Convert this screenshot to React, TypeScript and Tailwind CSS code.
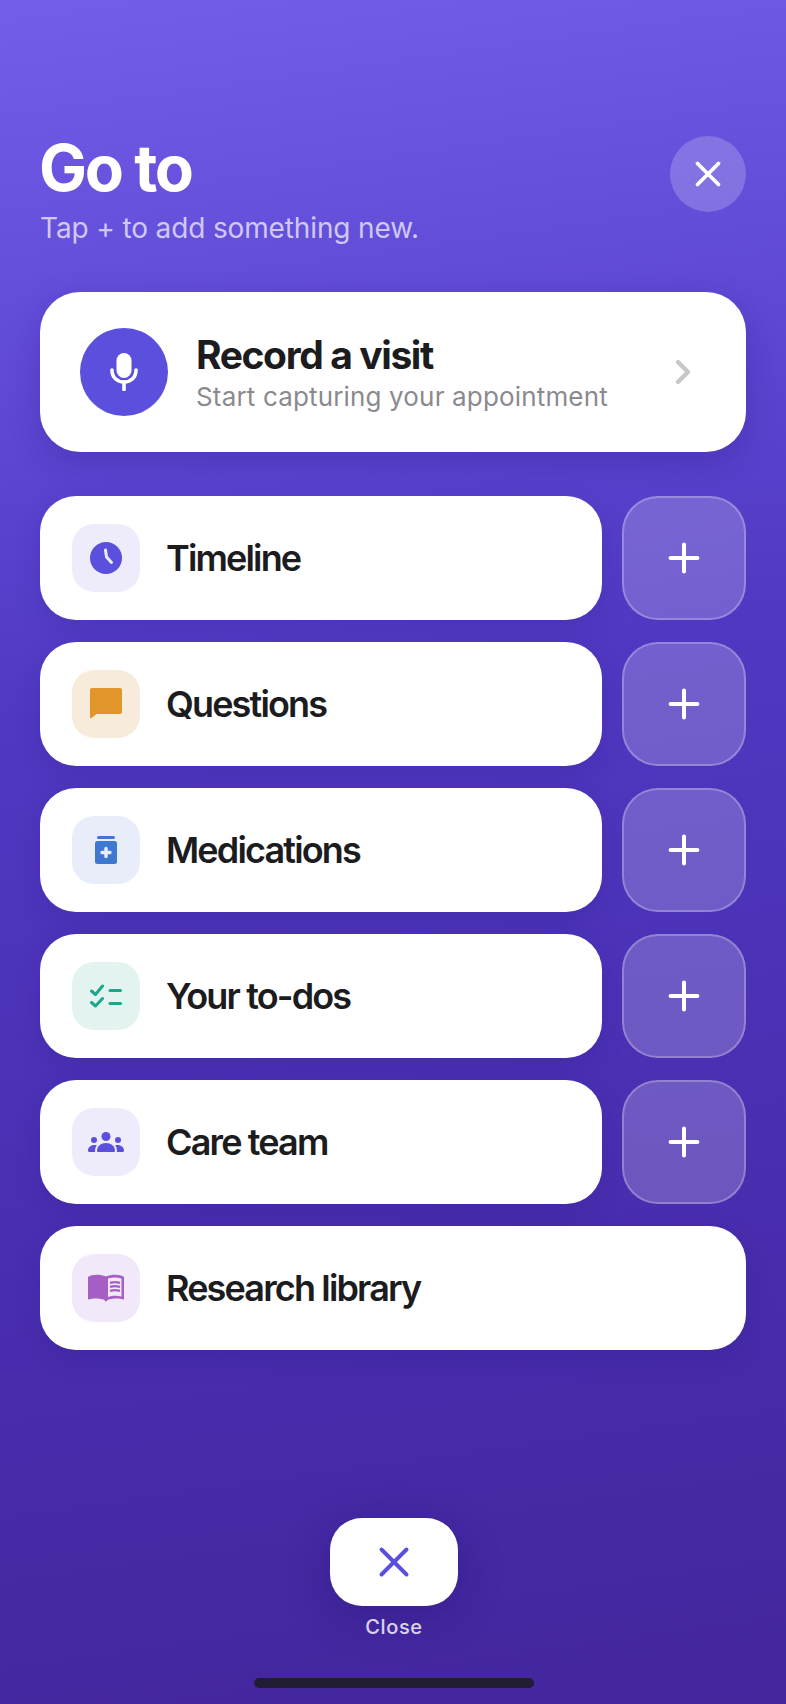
import { ChevronRight, Plus, X } from "lucide-react";
import type { ReactNode } from "react";

const ClockIcon = () => (
  <svg width="32" height="32" viewBox="0 0 32 32">
    <circle cx="16" cy="16" r="16" fill="#5b4fdd" />
    <path d="M15.500 8L16.500 15L21.500 20.500" fill="none" stroke="#eeebfb" strokeWidth="3" strokeLinecap="round" strokeLinejoin="round" />
  </svg>
);

const ChatIcon = () => (
  <svg width="32" height="32" viewBox="0 0 32 32">
    <path d="M2 0H30a2 2 0 0 1 2 2V24a2 2 0 0 1-2 2H6.500L1.500 30a1 1 0 0 1-1.500-.8V2a2 2 0 0 1 2-2Z" fill="#e2952b" />
  </svg>
);

const MedIcon = () => (
  <svg width="22" height="28" viewBox="0 0 22 28">
    <rect x="2" y="0" width="18" height="3" rx="1.500" fill="#3f78d0" />
    <rect x="0" y="5" width="22" height="23" rx="2.500" fill="#3f78d0" />
    <path d="M11 12.500V20.500M7 16.500H15" stroke="#e8edf9" strokeWidth="3.400" strokeLinecap="round" />
  </svg>
);

const TodoIcon = () => (
  <svg width="32" height="24" viewBox="0 0 32 24" fill="none" stroke="#1fa58a" strokeWidth="3" strokeLinecap="round" strokeLinejoin="round">
    <path d="M1.500 7L5.500 10.500L12.500 2" />
    <path d="M1.500 18.500L5.500 22L12.500 14.500" />
    <path d="M20 6.500H30.500" />
    <path d="M20 19.500H30.500" />
  </svg>
);

const TeamIcon = () => (
  <svg width="36" height="20" viewBox="0 0 36 20" fill="#5b4fdd">
    <circle cx="18" cy="4.500" r="4.500" />
    <circle cx="6" cy="8" r="3" />
    <circle cx="30" cy="8" r="3" />
    <path d="M9 19a1 1 0 0 0 1 1H26a1 1 0 0 0 1-1C27 14 23 11 18 11C13 11 9 14 9 19Z" />
    <path d="M0 18.500C0 15 3 13 7.500 13C8 13 8.500 13 8.800 13.200C7.500 14.800 7 17 7 20H1.500C.6 20 0 19.400 0 18.500Z" />
    <path d="M36 18.500C36 15 33 13 28.500 13C28 13 27.500 13 27.200 13.200C28.500 14.800 29 17 29 20H34.500C35.400 20 36 19.400 36 18.500Z" />
  </svg>
);

const BookIcon = () => (
  <svg width="36" height="28" viewBox="0 0 36 28">
    <path d="M0 3C4 0 12 0 18 2.500C24 0 32 0 36 3V24.700A.8.8 0 0 1 35 25.500C31 24 24 24 19.500 26C18.500 28 17.500 28 16.500 26C12 24 5 24 1 25.500A.8.8 0 0 1 0 24.700Z" fill="#a45ec4" />
    <path d="M20 4.500C24 3.200 29.500 3.200 33.500 4.600V22.500C29.500 21.500 24 21.500 20 23Z" fill="#f1e8f9" />
    <path d="M23 8.700C25.500 8 28.500 8 31 8.700M23 12.700C25.500 12 28.500 12 31 12.700M23 16.700C25.500 16 28.500 16 31 16.700" fill="none" stroke="#a45ec4" strokeWidth="2.400" strokeLinecap="round" />
  </svg>
);

const Row = ({ icon, tint, label, wide }: { icon: ReactNode; tint: string; label: string; wide?: boolean }) => (
  <div className="flex gap-5">
    <div className="flex h-[124px] flex-1 items-center gap-[26px] rounded-[36px] bg-white pl-8 shadow-[0_8px_24px_rgba(40,20,120,0.18)]">
      <div className={`flex h-[68px] w-[68px] items-center justify-center rounded-[22px] ${tint}`}>{icon}</div>
      <span className="text-[36px] font-semibold tracking-[-1.85px] text-[#1c1c1e]">{label}</span>
    </div>
    {!wide && (
      <button className="flex h-[124px] w-[124px] items-center justify-center rounded-[36px] border-2 border-white/25 bg-white/20">
        <Plus className="h-[46px] w-[46px] text-white" strokeWidth={2.1} />
      </button>
    )}
  </div>
);

export default function App() {
  return (
    <div className="flex h-[1704px] w-[786px] flex-col bg-[linear-gradient(172deg,#715ee9_0%,#5c46d2_25%,#5138c2_40%,#4d33b9_55%,#482cad_75%,#43269c_100%)] px-10 font-['Inter',sans-serif]">
      <div className="flex items-start justify-between pt-[128px]">
        <div>
          <h1 className="-ml-px text-[64px] leading-[80px] font-bold tracking-[-2.4px] text-white">Go to</h1>
          <p className="mt-[2px] text-[28px] leading-[36px] tracking-[-0.13px] text-white/70">Tap + to add something new.</p>
        </div>
        <button className="mt-2 flex h-[76px] w-[76px] items-center justify-center rounded-full bg-white/20">
          <X className="h-[42px] w-[42px] text-white" strokeWidth={2.1} />
        </button>
      </div>

      <div className="mt-[46px] flex h-[160px] items-center rounded-[40px] bg-white pr-[43px] pl-10 shadow-[0_10px_30px_rgba(40,20,120,0.25)]">
        <div className="flex h-[88px] w-[88px] items-center justify-center rounded-full bg-[#5b4fdd]">
          <svg width="30" height="38" viewBox="0 0 30 38" fill="none">
            <rect x="7.500" y="0" width="15" height="25" rx="7.500" fill="#fff" />
            <path d="M3 17C3 24.500 8 29 15 29C22 29 27 24.500 27 17" stroke="#fff" strokeWidth="3.600" strokeLinecap="round" />
            <path d="M15 29V36.500" stroke="#fff" strokeWidth="3.600" strokeLinecap="round" />
          </svg>
        </div>
        <div className="ml-[28px] flex-1">
          <div className="pt-px text-[39px] leading-[46px] font-bold tracking-[-1.4px] text-[#1c1c1e]">Record a visit</div>
          <div className="mt-[2px] text-[26px] leading-[34px] tracking-[0.16px] text-[#8a8a8e]">Start capturing your appointment</div>
        </div>
        <ChevronRight className="h-[40px] w-[40px] text-[#c7c7cc]" strokeWidth={2.6} />
      </div>

      <div className="mt-[44px] flex flex-col gap-[22px]">
        <Row icon={<ClockIcon />} tint="bg-[#eeebfb]" label="Timeline" />
        <Row icon={<ChatIcon />} tint="bg-[#f7ecdc]" label="Questions" />
        <Row icon={<MedIcon />} tint="bg-[#e8edf9]" label="Medications" />
        <Row icon={<TodoIcon />} tint="bg-[#e3f3ef]" label="Your to-dos" />
        <Row icon={<TeamIcon />} tint="bg-[#eeebfb]" label="Care team" />
        <Row icon={<BookIcon />} tint="bg-[#f1e8f9]" label="Research library" wide />
      </div>

      <div className="mt-auto flex flex-col items-center pb-4 pl-[2px]">
        <button className="flex h-[88px] w-[128px] items-center justify-center rounded-[32px] bg-white shadow-[0_8px_40px_rgba(30,15,100,0.35)]">
          <X className="h-[50px] w-[50px] text-[#5b4fdd]" strokeWidth={1.9} />
        </button>
        <span className="mt-[8px] text-[20px] leading-[26px] font-medium tracking-[0.6px] text-white/80">Close</span>
        <div className="mt-[38px] h-[10px] w-[280px] rounded-full bg-[#211d33]" />
      </div>
    </div>
  );
}
